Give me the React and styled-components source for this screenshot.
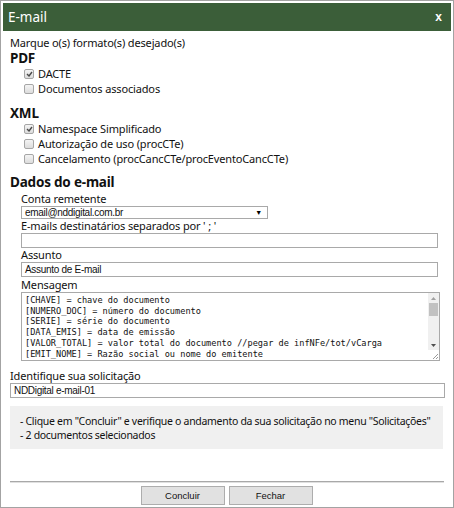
import React from "react";
import styled, { createGlobalStyle } from "styled-components";

const GlobalStyle = createGlobalStyle`
  html, body {
    margin: 0;
    padding: 0;
    background: #fff;
  }
  body {
    font-family: "Noto Sans", "Open Sans", sans-serif;
    color: #111;
  }
`;

const Dialog = styled.div`
  box-sizing: border-box;
  width: 454px;
  height: 508px;
  border: 1px solid #a3a3a3;
  padding: 2px;
  display: flex;
  flex-direction: column;
  background: #fff;
  overflow: hidden;
`;

const TitleBar = styled.div`
  flex: none;
  height: 28px;
  background: #3b5e39;
  display: flex;
  align-items: center;
  justify-content: space-between;
  padding: 0 9px 0 5px;
  color: #fff;
  font-size: 13.5px;
`;

const Close = styled.span`
  font-family: "Liberation Sans", Arial, sans-serif;
  font-weight: 700;
  font-size: 12px;
`;

const Body = styled.div`
  flex: 1;
  display: flex;
  flex-direction: column;
  padding: 5px 6px 0 7px;
  font-size: 11px;
  letter-spacing: -0.15px;
`;

const Text = styled.div`
  line-height: 14px;
  margin-top: ${(p) => p.$mt || 0}px;
`;

const Heading = styled.div`
  font-weight: 700;
  font-size: 13.5px;
  letter-spacing: -0.2px;
  line-height: 15px;
  margin-top: ${(p) => p.$mt || 0}px;
`;

const Option = styled.label`
  display: flex;
  align-items: center;
  gap: 4px;
  height: 15px;
  padding-left: 14px;
`;

const Box = styled.span`
  box-sizing: border-box;
  width: 10px;
  height: 10px;
  border: 1px solid #a6a6a6;
  border-radius: 2px;
  background: linear-gradient(#f4f4f4, #dcdcdc);
  display: flex;
  align-items: center;
  justify-content: center;
`;

const Field = styled.div`
  display: flex;
  flex-direction: column;
  padding-left: 11px;
  margin-right: ${(p) => p.$mr || 0}px;
`;

const Label = styled.div`
  line-height: 14px;
  margin-top: ${(p) => p.$mt || 0}px;
`;

const Input = styled.div`
  box-sizing: border-box;
  height: ${(p) => p.$h || 15}px;
  border: 1px solid #a9a9a9;
  background: #fff;
  font-family: "Liberation Sans", Arial, sans-serif;
  font-size: 10px;
  letter-spacing: -0.3px;
  padding: 0 3px;
  display: flex;
  align-items: center;
  justify-content: space-between;
`;

const Select = styled(Input)`
  width: 247px;
  height: 13px;
`;

const Arrow = styled.span`
  font-size: 7px;
  color: #000;
  margin-right: 2px;
`;

const Message = styled.div`
  box-sizing: border-box;
  height: 69px;
  border: 1px solid #a9a9a9;
  display: flex;
`;

const MessageText = styled.div`
  flex: 1;
  overflow: hidden;
  padding: 2px 3px;
  font-family: "DejaVu Sans Mono", "Liberation Mono", monospace;
  font-size: 8.6px;
  letter-spacing: 0;
  line-height: 10.7px;
  white-space: pre;
  color: #111;
`;

const ScrollBar = styled.div`
  flex: none;
  width: 11px;
  display: flex;
  flex-direction: column;
  background: #fff;
`;

const Track = styled.div`
  flex: 1;
  background: #f0f0f0;
  display: flex;
  flex-direction: column;
  align-items: center;
`;

const ScrollBtn = styled.div`
  height: 10px;
  width: 100%;
  display: flex;
  align-items: center;
  justify-content: center;
`;

const Thumb = styled.div`
  width: 9px;
  height: 13px;
  background: #c1c1c1;
`;

const Spacer = styled.div`
  flex: 1;
`;

const Grip = styled.div`
  height: 10px;
  display: flex;
  align-items: flex-end;
  justify-content: flex-end;
`;

const Info = styled.div`
  margin: 8px 2px 0 0;
  padding: 8px 6px 7px 10px;
  background: #f0f0f0;
  font-size: 10.5px;
  line-height: 14px;
  letter-spacing: -0.3px;
  white-space: nowrap;
`;

const Footer = styled.div`
  margin-top: auto;
  display: flex;
  flex-direction: column;
`;

const Rule = styled.div`
  height: 1px;
  border-top: 1px solid #a8a8a8;
  background: #e0e0e0;
  margin-right: 1px;
`;

const Buttons = styled.div`
  display: flex;
  justify-content: center;
  gap: 4px;
  margin-top: 3px;
  padding-right: 2px;
`;

const Button = styled.button`
  box-sizing: border-box;
  width: 84px;
  height: 19px;
  border: 1px solid #adadad;
  background: #e1e1e1;
  font-family: "Liberation Sans", Arial, sans-serif;
  font-size: 9.5px;
  color: #111;
  padding: 0;
`;

const Check = () => (
  <svg width="7" height="6" viewBox="0 0 7 6">
    <path d="M1 3 L3 5 L6 1" fill="none" stroke="#4a4a4a" strokeWidth="1.4" />
  </svg>
);

const Checkbox = ({ checked, children }) => (
  <Option>
    <Box>{checked && <Check />}</Box>
    <span>{children}</span>
  </Option>
);

const Tri = ({ up }) => (
  <svg width="5" height="3" viewBox="0 0 5 3">
    <path d={up ? "M0 3 L2.5 0 L5 3 Z" : "M0 0 L2.5 3 L5 0 Z"} fill={up ? "#a0a0a0" : "#505050"} />
  </svg>
);

const message = `[CHAVE] = chave do documento
[NUMERO_DOC] = número do documento
[SERIE] = série do documento
[DATA_EMIS] = data de emissão
[VALOR_TOTAL] = valor total do documento //pegar de infNFe/tot/vCarga
[EMIT_NOME] = Razão social ou nome do emitente`;

export default function App() {
  return (
    <>
      <GlobalStyle />
      <Dialog>
        <TitleBar>
          <span>E-mail</span>
          <Close>x</Close>
        </TitleBar>
        <Body>
          <Text>Marque o(s) formato(s) desejado(s)</Text>
          <Heading $mt={1}>PDF</Heading>
          <Checkbox checked>DACTE</Checkbox>
          <Checkbox>Documentos associados</Checkbox>

          <Heading $mt={10}>XML</Heading>
          <Checkbox checked>Namespace Simplificado</Checkbox>
          <Checkbox>Autorização de uso (procCTe)</Checkbox>
          <Checkbox>Cancelamento (procCancCTe/procEventoCancCTe)</Checkbox>

          <Heading $mt={9}>Dados do e-mail</Heading>
          <Field>
            <Label $mt={2}>Conta remetente</Label>
            <Select>
              <span>email@nddigital.com.br</span>
              <Arrow>▼</Arrow>
            </Select>
          </Field>
          <Field $mr={7}>
            <Label>E-mails destinatários separados por ' ; '</Label>
            <Input />
          </Field>
          <Field $mr={7}>
            <Label>Assunto</Label>
            <Input>Assunto de E-mail</Input>
          </Field>
          <Field $mr={5}>
            <Label $mt={1}>Mensagem</Label>
            <Message>
              <MessageText>{message}</MessageText>
              <ScrollBar>
                <Track>
                  <ScrollBtn>
                    <Tri up />
                  </ScrollBtn>
                  <Thumb />
                  <Spacer />
                  <ScrollBtn>
                    <Tri />
                  </ScrollBtn>
                </Track>
                <Grip>
                  <svg width="8" height="8" viewBox="0 0 8 8">
                    <path d="M7 2 L2 7 M7 5 L5 7" stroke="#9a9a9a" strokeWidth="1" />
                  </svg>
                </Grip>
              </ScrollBar>
            </Message>
          </Field>

          <Label $mt={8}>Identifique sua solicitação</Label>
          <Input>NDDigital e-mail-01</Input>

          <Info>
            <div>- Clique em "Concluir" e verifique o andamento da sua solicitação no menu "Solicitações"</div>
            <div>- 2 documentos selecionados</div>
          </Info>

          <Footer>
            <Rule />
            <Buttons>
              <Button>Concluir</Button>
              <Button>Fechar</Button>
            </Buttons>
          </Footer>
        </Body>
      </Dialog>
    </>
  );
}
